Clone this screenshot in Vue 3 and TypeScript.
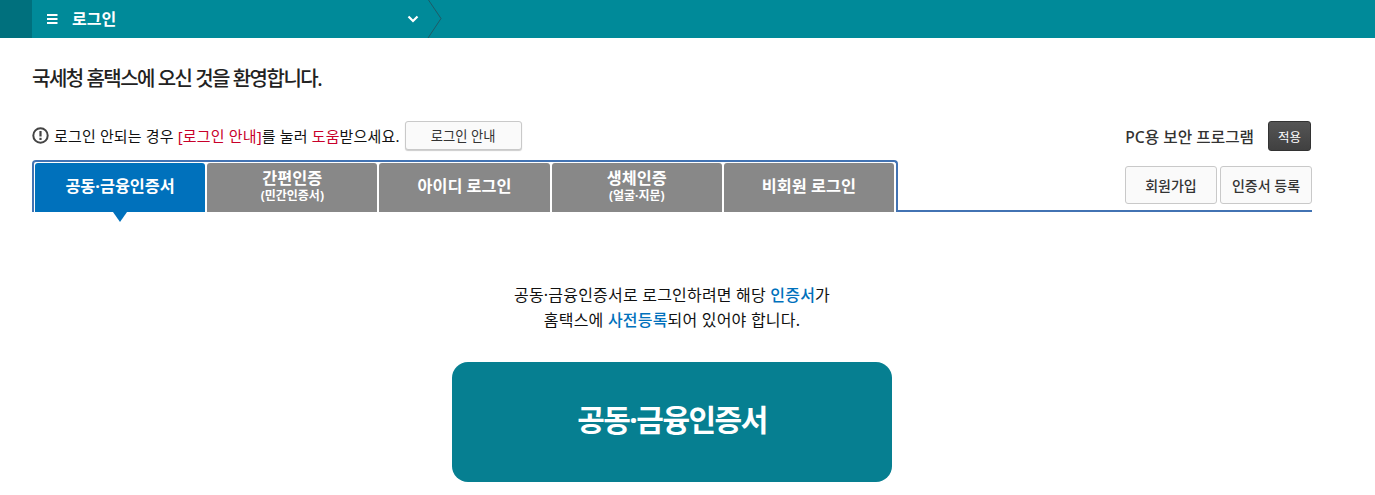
<template>
  <div class="page">
    <header class="topbar">
      <div class="topbar-side"></div>
      <div class="crumb">
        <svg class="menu-icon" width="11" height="10" viewBox="0 0 11 10">
          <path d="M0 1h10.500M0 5h10.500M0 9h10.500" stroke="#fff" stroke-width="2" />
        </svg>
        <span class="crumb-label">로그인</span>
        <svg class="chevron" width="12" height="8" viewBox="0 0 12 8">
          <path d="M1.500 1.500 6 6l4.500-4.500" fill="none" stroke="#fff" stroke-width="2.200" />
        </svg>
      </div>
      <svg class="crumb-arrow" width="16" height="38" viewBox="0 0 16 38">
        <path d="M1.500 0 14 18.500 1 38" fill="none" stroke="#1f5a66" stroke-width="1" />
      </svg>
    </header>

    <main class="content">
      <h1 class="welcome">국세청 홈택스에 오신 것을 환영합니다.</h1>

      <div class="notice-row">
        <div class="notice">
          <svg class="notice-icon" width="17" height="17" viewBox="0 0 17 17">
            <circle cx="8.500" cy="8.500" r="7.200" fill="none" stroke="#444" stroke-width="2" />
            <path d="M8.500 4v5.500" stroke="#444" stroke-width="2.200" />
            <path d="M8.500 10.800v2.200" stroke="#444" stroke-width="2.200" />
          </svg>
          <span>로그인 안되는 경우 <em>[로그인 안내]</em>를 눌러 <em>도움</em>받으세요.</span>
          <button class="btn guide-btn" type="button">로그인 안내</button>
        </div>
        <div class="security">
          <span class="security-label">PC용 보안 프로그램</span>
          <button class="apply-btn" type="button">적용</button>
        </div>
      </div>

      <div class="tab-row">
        <div class="tabs">
          <div
            v-for="(tab, index) in tabs"
            :key="tab.title"
            class="tab"
            :class="{ active: index === 0 }"
          >
            <span class="tab-title">{{ tab.title }}</span>
            <span v-if="tab.sub" class="tab-sub">{{ tab.sub }}</span>
          </div>
        </div>
        <div class="side-actions">
          <button class="btn side-btn" type="button">회원가입</button>
          <button class="btn side-btn" type="button">인증서 등록</button>
        </div>
      </div>

      <section class="panel">
        <p class="panel-text">
          공동·금융인증서로 로그인하려면 해당 <b>인증서</b>가<br />
          홈택스에 <b>사전등록</b>되어 있어야 합니다.
        </p>
        <button class="cert-login" type="button">공동·금융인증서</button>
      </section>
    </main>
  </div>
</template>

<script setup lang="ts">
interface LoginTab {
  title: string
  sub?: string
}

const tabs: LoginTab[] = [
  { title: '공동·금융인증서' },
  { title: '간편인증', sub: '(민간인증서)' },
  { title: '아이디 로그인' },
  { title: '생체인증', sub: '(얼굴·지문)' },
  { title: '비회원 로그인' }
]
</script>

<style>
html,
body {
  margin: 0;
  background: #fff;
  overflow: hidden;
}
</style>

<style scoped>
.page {
  height: 495px;
  overflow: hidden;
  font-family: "Noto Sans", "Noto Sans CJK KR", sans-serif;
  color: #222;
}

.topbar {
  display: flex;
  height: 38px;
  background: #008a99;
}

.topbar-side {
  width: 32px;
  background: #00707d;
}

.crumb {
  display: flex;
  align-items: center;
  width: 395px;
  padding-left: 15px;
  box-sizing: border-box;
  color: #fff;
}

.menu-icon {
  margin-right: 14px;
}

.crumb-label {
  flex: 1;
  font-size: 16px;
  font-weight: 700;
  line-height: 36px;
}

.chevron {
  margin-right: 8px;
}

.content {
  padding: 0 63px 0 32px;
}

.welcome {
  margin: 27px 0 0;
  font-size: 20px;
  line-height: 28px;
  font-weight: 500;
  letter-spacing: -1.5px;
  color: #222;
}

.notice-row {
  display: flex;
  justify-content: space-between;
  align-items: flex-start;
  margin-top: 28px;
  height: 39px;
}

.notice {
  display: flex;
  align-items: center;
  height: 29px;
  font-size: 15px;
  letter-spacing: 0.15px;
  color: #111;
}

.notice-icon {
  margin-right: 5px;
}

.notice em {
  font-style: normal;
  color: #c8002a;
}

.btn {
  background: #fafafa;
  border: 1px solid #c9c9c9;
  border-radius: 3px;
  font-family: inherit;
  color: #333;
  padding: 0;
}

.guide-btn {
  width: 117px;
  height: 29px;
  margin-left: 5px;
  font-size: 13.300px;
  letter-spacing: 0;
  box-shadow: 0 1px 1px #ccc;
}

.security {
  display: flex;
  align-items: center;
  height: 30px;
}

.security-label {
  font-size: 15.700px;
  font-weight: 500;
  color: #333;
}

.apply-btn {
  width: 43px;
  height: 30px;
  margin: 0 1px 0 14px;
  padding: 0;
  border: 1px solid #333;
  border-radius: 3px;
  background: linear-gradient(#555, #404040);
  color: #fff;
  font-family: inherit;
  font-size: 12.500px;
}

.tab-row {
  display: flex;
  justify-content: space-between;
  align-items: flex-end;
  height: 50px;
  border-bottom: 2px solid #4273b3;
}

.tabs {
  display: flex;
  gap: 2px;
  width: 866px;
  height: 52px;
  margin-bottom: -2px;
  box-sizing: border-box;
  padding: 1px 2px 0 1px;
  background: #fff;
  border: 2px solid #4273b3;
  border-bottom: none;
  border-radius: 4px 4px 0 0;
}

.tab {
  position: relative;
  display: flex;
  flex: 1;
  flex-direction: column;
  align-items: center;
  justify-content: center;
  height: 49px;
  padding-bottom: 4px;
  box-sizing: border-box;
  background: #888;
  border-radius: 3px 3px 0 0;
  color: #fff;
}

.tab.active {
  background: #0071bc;
}

.tab.active::after {
  content: "";
  position: absolute;
  top: 49px;
  left: 78px;
  border-left: 7px solid transparent;
  border-right: 7px solid transparent;
  border-top: 10px solid #0071bc;
}

.tab-title {
  font-size: 16.300px;
  font-weight: 700;
  line-height: 20px;
}

.tab-sub {
  font-size: 12px;
  font-weight: 700;
  line-height: 15px;
}

.side-actions {
  display: flex;
  gap: 3px;
  margin-bottom: 6px;
}

.side-btn {
  width: 92px;
  height: 38px;
  font-size: 14px;
  font-weight: 500;
}

.panel {
  display: flex;
  flex-direction: column;
  align-items: center;
  padding-top: 71px;
}

.panel-text {
  margin: 0;
  font-size: 16px;
  line-height: 25px;
  letter-spacing: 0.2px;
  text-align: center;
  color: #111;
}

.panel-text b {
  font-weight: 500;
  color: #0071bc;
}

.cert-login {
  width: 440px;
  height: 120px;
  margin-top: 29px;
  padding: 0 0 8px;
  border: none;
  border-radius: 16px;
  background: #067f91;
  color: #fff;
  font-family: inherit;
  font-size: 30px;
  font-weight: 700;
  letter-spacing: -1.5px;
}
</style>
